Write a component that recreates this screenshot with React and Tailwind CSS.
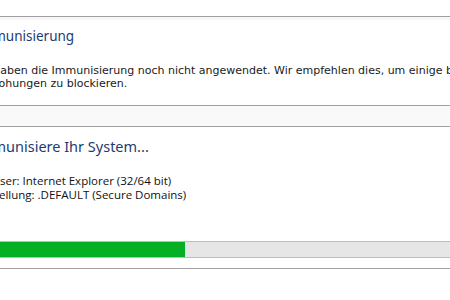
export default function App() {
  return (
    <div className="w-[450px] h-[300px] bg-white overflow-hidden relative">
      <div className="h-[16px] bg-white" />
      <div className="h-px bg-[#a0a0a0]" />
      <div className="h-[3px] bg-[#f7f7f7]" />
      <div className="h-[85px] bg-white pt-[6px]">
        <div className="ml-[-24px] text-[13.5px] leading-[20px] text-[#1e3b70] whitespace-nowrap font-['Noto_Sans',sans-serif]">Immunisierung</div>
        <div className="ml-[-27px] mt-[18px] text-[11px] leading-[13px] text-[#1a1a1a] whitespace-nowrap font-['DejaVu_Sans',sans-serif]">
          <div>Sie haben die Immunisierung noch nicht angewendet. Wir empfehlen dies, um einige bekannte</div>
          <div>Bedrohungen zu blockieren.</div>
        </div>
      </div>
      <div className="h-px bg-[#a0a0a0]" />
      <div className="h-[20px] bg-[#f9f9f9]" />
      <div className="h-px bg-[#a0a0a0]" />
      <div className="h-[114px] bg-white pt-[9px]">
        <div className="ml-[-26px] text-[14.5px] leading-[20px] text-[#1e3b70] whitespace-nowrap font-['Noto_Sans',sans-serif]">Immunisiere Ihr System...</div>
        <div className="ml-[-28px] mt-[18px] text-[11.5px] leading-[14px] text-[#111111] whitespace-nowrap font-['Open_Sans',sans-serif]">
          <div>Browser: Internet Explorer (32/64 bit)</div>
          <div className="ml-[1px]">Einstellung: .DEFAULT (Secure Domains)</div>
        </div>
      </div>
      <div className="absolute left-0 top-[241px] w-[450px] h-[17px] border-y border-[#bcbcbc] bg-[#e6e6e6] flex">
        <div className="w-[186px] h-full bg-[#06b025] border-r border-[#d8f0d8]" />
      </div>
      <div className="absolute left-0 top-[268px] w-[450px] h-px bg-[#a0a0a0]" />
    </div>
  );
}
